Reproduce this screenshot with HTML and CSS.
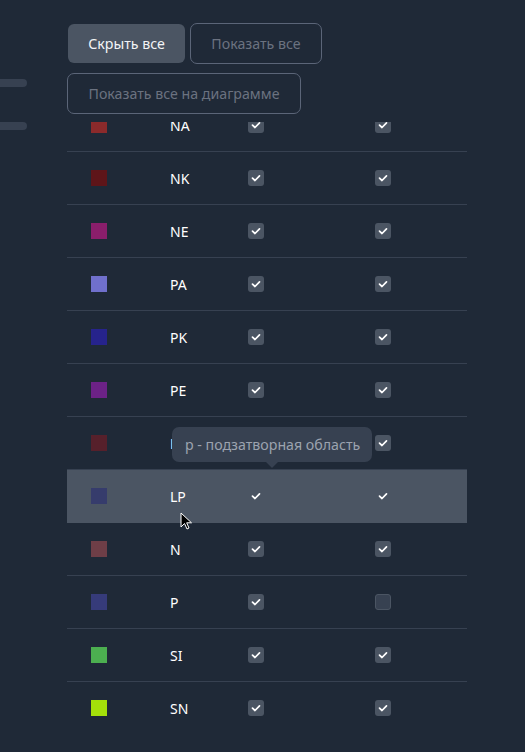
FILE: index.html
```html
<!DOCTYPE html>
<html lang="ru">
<head>
<meta charset="utf-8">
<link rel="stylesheet" href="styles.css">
</head>
<body>
<div class="page">
  <aside class="side">
    <div class="bar bar1"></div>
    <div class="bar bar2"></div>
  </aside>
  <main class="main">
    <div class="head">
      <div class="btns">
        <button class="btn btn-solid">Скрыть все</button>
        <button class="btn btn-outline">Показать все</button>
        <button class="btn btn-outline">Показать все на диаграмме</button>
      </div>
    </div>
    <div class="list">
      <div class="row"><span class="sw" style="background:#8b2a2b"></span><span class="nm">NA</span><span class="cb on"></span><span class="cb on"></span></div>
      <div class="row"><span class="sw" style="background:#5e1519"></span><span class="nm">NK</span><span class="cb on"></span><span class="cb on"></span></div>
      <div class="row"><span class="sw" style="background:#8a1e6b"></span><span class="nm">NE</span><span class="cb on"></span><span class="cb on"></span></div>
      <div class="row"><span class="sw" style="background:#7070cc"></span><span class="nm">PA</span><span class="cb on"></span><span class="cb on"></span></div>
      <div class="row"><span class="sw" style="background:#26238c"></span><span class="nm">PK</span><span class="cb on"></span><span class="cb on"></span></div>
      <div class="row"><span class="sw" style="background:#6c2287"></span><span class="nm">PE</span><span class="cb on"></span><span class="cb on"></span></div>
      <div class="row"><span class="sw" style="background:#56202b"></span><span class="nm">LN</span><span class="cb on"></span><span class="cb on"></span></div>
      <div class="row row-hover"><span class="sw" style="background:#363c6c"></span><span class="nm">LP</span><span class="cb on"></span><span class="cb on"></span>
        <div class="tip">р - подзатворная область</div>
        <svg class="cursor" width="13" height="19" viewBox="0 0 13 19"><path d="M1 1 L1 15 L4.5 11.5 L7 17 L9 16 L6.7 10.8 L11.5 10.8 Z" fill="#000" stroke="#fff" stroke-width="1"/></svg>
      </div>
      <div class="row"><span class="sw" style="background:#6e3e47"></span><span class="nm">N</span><span class="cb on"></span><span class="cb on"></span></div>
      <div class="row"><span class="sw" style="background:#363b7a"></span><span class="nm">P</span><span class="cb on"></span><span class="cb"></span></div>
      <div class="row"><span class="sw" style="background:#4caf50"></span><span class="nm">SI</span><span class="cb on"></span><span class="cb on"></span></div>
      <div class="row"><span class="sw" style="background:#a4e00a"></span><span class="nm">SN</span><span class="cb on"></span><span class="cb on"></span></div>
    </div>
  </main>
</div>
</body>
</html>
```

FILE: styles.css
```css
* { box-sizing: border-box; }
html, body {
  margin: 0;
  background: #1f2937;
  font-family: "Noto Sans", "Open Sans", sans-serif;
  overflow: hidden;
}
.page {
  display: flex;
  height: 752px;
}
.side {
  width: 67px;
  flex: none;
  padding-top: 79px;
}
.bar {
  width: 27px;
  height: 8px;
  background: #374151;
  border-radius: 0 4px 4px 0;
}
.bar2 { margin-top: 35px; }
.main {
  width: 400px;
  flex: none;
}
.head {
  position: relative;
  z-index: 2;
  background: #1f2937;
  padding: 23px 0 8px;
}
.btns {
  display: flex;
  flex-wrap: wrap;
  gap: 9px 4px;
}
.btn {
  height: 41px;
  border-radius: 7px;
  font-family: inherit;
  font-size: 14.2px;
  padding: 0;
  cursor: pointer;
}
.btn-solid {
  background: #4b5563;
  background-clip: padding-box;
  border: 1px solid transparent;
  color: #f3f4f6;
  width: 119px;
}
.btn-outline {
  background: transparent;
  border: 1px solid #5b6578;
  color: #6b7280;
}
.btns .btn-outline:nth-child(2) { width: 132px; }
.btns .btn-outline:nth-child(3) { width: 234px; }
.list {
  margin-top: -23px;
  position: relative;
  z-index: 1;
}
.row {
  position: relative;
  display: grid;
  grid-template-columns: 79px 78px 127px 1fr;
  align-items: center;
  height: 53px;
  padding-left: 24px;
  border-bottom: 1px solid #374151;
}
.row:last-child { border-bottom-color: transparent; }
.row-hover {
  background: #4b5563;
  border-bottom-color: #4b5563;
}
.sw {
  width: 16px;
  height: 16px;
  display: block;
}
.nm {
  color: #ffffff;
  font-size: 14px;
  font-weight: 400;
}
.cb {
  width: 16px;
  height: 16px;
  border-radius: 3px;
  display: block;
  background: #374151;
  border: 1px solid #4b5563;
}
.cb.on {
  border: none;
  background: #4b5563 url("data:image/svg+xml,%3Csvg xmlns='http://www.w3.org/2000/svg' viewBox='0 0 16 16'%3E%3Cpath d='M4.5 8.2 L7 10.5 L11.5 5.8' fill='none' stroke='white' stroke-width='1.7' stroke-linecap='round' stroke-linejoin='round'/%3E%3C/svg%3E") center/16px 16px no-repeat;
}
.tip {
  position: absolute;
  left: 105px;
  top: -43px;
  width: 200px;
  height: 35px;
  background: #374151;
  border-radius: 7px;
  color: #9ca3af;
  font-size: 14.2px;
  display: flex;
  align-items: center;
  padding-left: 13px;
  z-index: 3;
}
.tip::after {
  content: "";
  position: absolute;
  left: 94px;
  bottom: -6px;
  border-left: 6px solid transparent;
  border-right: 6px solid transparent;
  border-top: 6px solid #374151;
}
.cursor {
  position: absolute;
  left: 113px;
  top: 42px;
  z-index: 4;
}
```
